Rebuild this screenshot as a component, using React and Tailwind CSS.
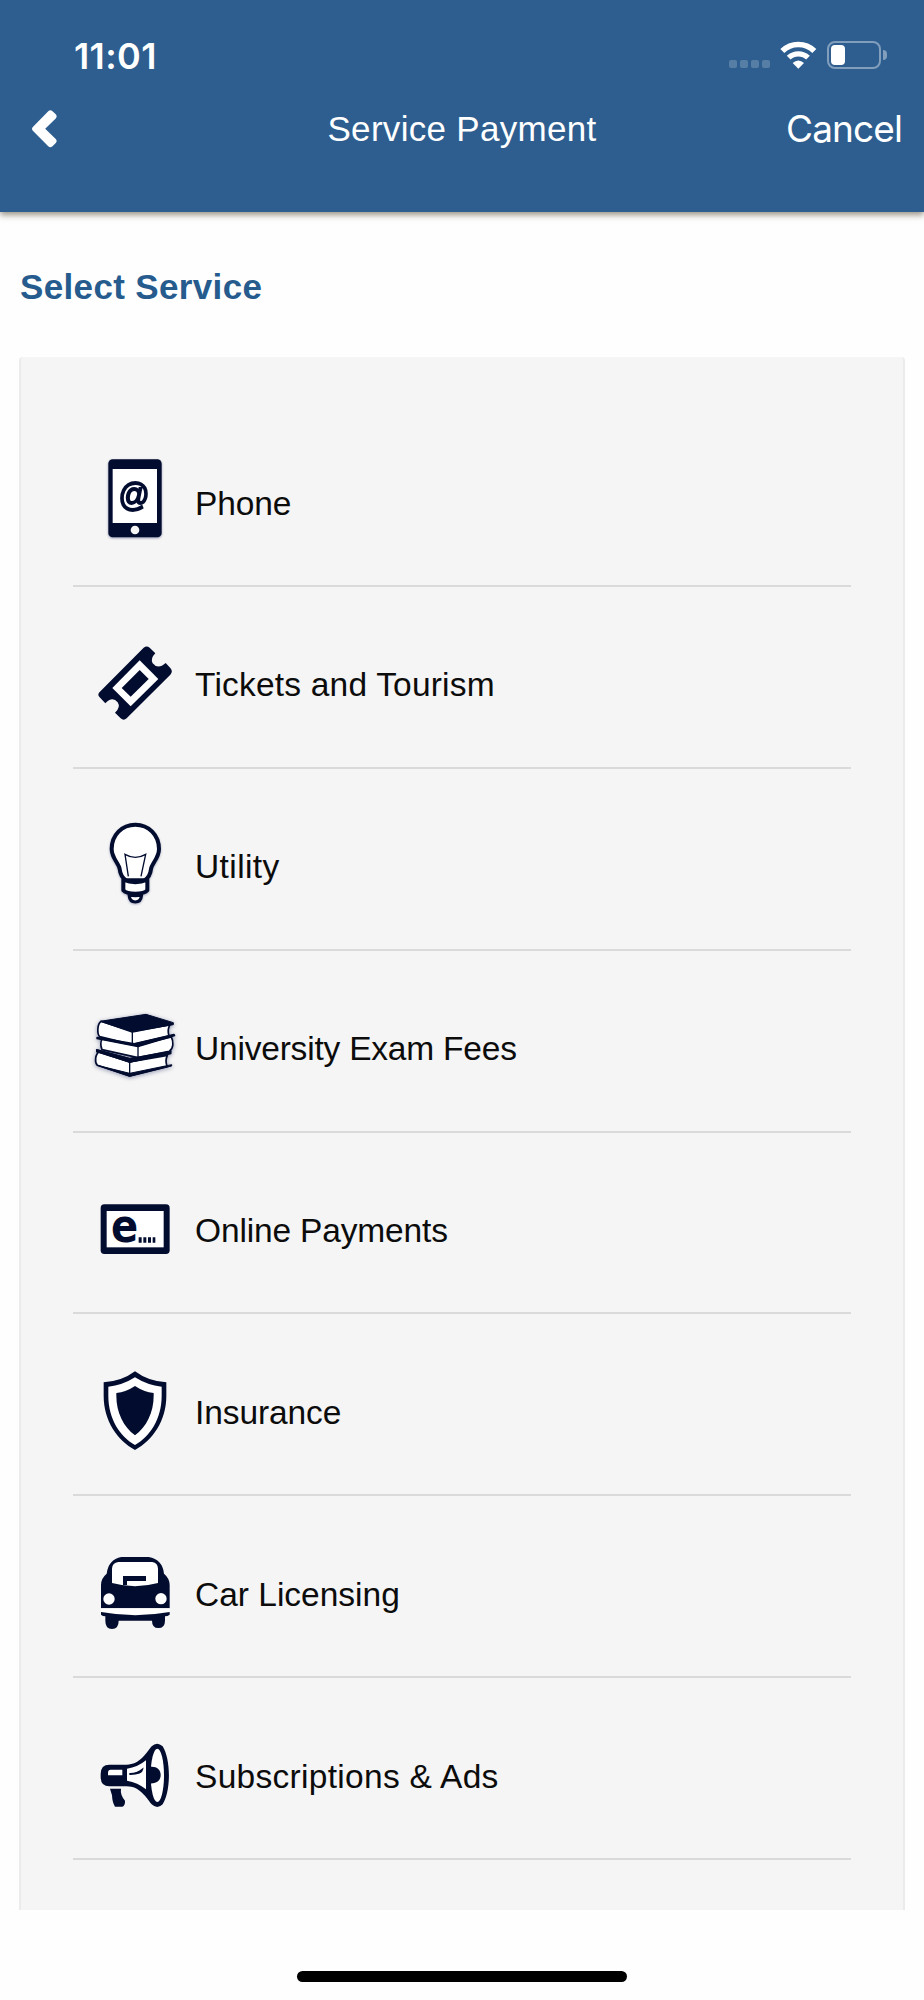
import React from 'react';

const NAVY = '#020c2f';

function PhoneIcon() {
  return (
    <svg viewBox="39 41 252 288" className="w-[84px] h-[96px] drop-shadow-[0_1px_1px_rgba(2,12,80,0.4)]">
      <rect x="85" y="57" width="160" height="234" rx="13" fill={NAVY} />
      <rect x="98" y="86" width="133" height="162" fill="#fff" />
      <text transform="translate(162 198) scale(0.98 1.08)" textAnchor="middle" fontSize="94" fontFamily="Liberation Sans, sans-serif" fill={NAVY} stroke={NAVY} strokeWidth="5">@</text>
      <circle cx="165" cy="269" r="13" fill="#f5f5f5" />
    </svg>
  );
}

function TicketIcon() {
  return (
    <svg viewBox="39 17 252 288" className="w-[84px] h-[96px]">
      <path d="M191 52q9-7 18 0l17 17q-16 16-8 30q16 20 39-1l14 15q9 10 0 20L140 264q-9 8-18 0l-17-17q18-16 8-31q-16-20-37 3l-17-18q-8-8 0-16z" fill={NAVY} />
      <path d="M179 90L235 146L152 228L97 173z" fill="#fff" />
      <path d="M179 119L206 146L152 199L125 173z" fill={NAVY} />
    </svg>
  );
}

function BulbIcon() {
  return (
    <svg viewBox="39 54 252 288" className="w-[84px] h-[96px] drop-shadow-[0_1px_1px_rgba(2,12,80,0.3)]">
      <path d="M166 74c-40 0-71 31-71 73c0 28 22 43 24 60c2 18 10 28 19 34h56c9-6 17-16 19-34c2-17 24-32 24-60c0-42-31-73-71-73z" fill="#fff" stroke={NAVY} strokeWidth="12" />
      <path d="M145 229l-10-66q31 18 62 0l-14 66" fill="none" stroke={NAVY} strokeWidth="4" />
      <path d="M130 239q36 15 72 0v32q-8 10-36 10q-28 0-36-10z" fill="#fff" stroke={NAVY} strokeWidth="12" strokeLinejoin="round" />
      <path d="M147 285q2 21 19 21q17 0 19-21q-19 4-38 0z" fill="#fff" stroke={NAVY} strokeWidth="9" strokeLinejoin="round" />
    </svg>
  );
}

function BooksIcon() {
  return (
    <svg viewBox="39 29 252 288" className="w-[84px] h-[96px] drop-shadow-[0_1px_2px_rgba(2,12,80,0.4)]">
      <g stroke={NAVY} strokeWidth="5" strokeLinejoin="round">
        <path d="M60 183c-16 8-16 34-8 42l97 32l113-29q-8-16 0-33l-113 20z" fill="#fff" />
        <path d="M52 225l97 24l126-26v4l-126 31z" fill={NAVY} strokeWidth="3" />
        <path d="M50 178l99 27l123-24v9l-123 25l-99-31z" fill={NAVY} strokeWidth="4" />
        <path d="M149 213v41" strokeWidth="4" />
        <path d="M66 146q-7 14 0 32l108 24l94-19c13-8 13-30 6-43l-100 24z" fill="#fff" />
        <path d="M50 179l99 26l123-22v6l-123 26l-99-31z" fill={NAVY} strokeWidth="4" />
        <path d="M174 168v33" strokeWidth="4" />
        <path d="M64 93c-13 7-13 38-5 46l98 24l110-26q-6-19 3-34l-113 22z" fill="#fff" />
        <path d="M51 141l112 19l119-28l2 4l-110 33l-123-24z" fill={NAVY} strokeWidth="4" />
        <path d="M60 93l138-21l82 25v6l-123 21z" fill={NAVY} strokeWidth="3" />
        <path d="M157 124v36" strokeWidth="4" />
      </g>
    </svg>
  );
}

function OnlineIcon() {
  return (
    <svg viewBox="39 4 252 288" className="w-[84px] h-[96px]">
      <rect x="62" y="71" width="207" height="149" rx="11" fill={NAVY} />
      <rect x="80" y="91" width="171" height="109" fill="#fff" />
      <text transform="translate(93 185) scale(0.89 1.04)" fontSize="135" fontWeight="700" fontFamily="DejaVu Sans, sans-serif" fill={NAVY}>e</text>
      <path d="M176 170h9v16h-9zM190 170h9v16h-9zM204 170h9v16h-9zM218 170h8v16h-8z" fill={NAVY} />
    </svg>
  );
}

function ShieldIcon() {
  return (
    <svg viewBox="39 41 252 288" className="w-[84px] h-[96px]">
      <path d="M165 63q40 30 94 33v40c0 76-41 133-94 163c-53-30-94-87-94-163V96q54-3 94-33z" fill={NAVY} />
      <path d="M165 81q38 24 80 28v27c0 70-35 122-80 148c-45-26-80-78-80-148v-27q42-4 80-28z" fill="#fff" />
      <path d="M165 107q27 18 56 21v8c0 51-22 94-56 119c-34-25-56-68-56-119v-8q29-3 56-21z" fill={NAVY} />
    </svg>
  );
}

function CarIcon() {
  return (
    <svg viewBox="39 45 252 288" className="w-[84px] h-[96px]">
      <path d="M124 78h82q42 8 46 50q17 14 17 34v70H63v-70q0-20 17-34q5-42 44-50z" fill={NAVY} />
      <path d="M115 93h102q16 2 17 20v43q-69 19-138 0v-43q1-18 19-20z" fill="#fff" />
      <path d="M129 135h69v15h-57v12h-12z" fill={NAVY} />
      <circle cx="87" cy="204" r="17" fill="#fff" />
      <circle cx="243" cy="203" r="17" fill="#fff" />
      <path d="M63 232h206v10q-103 18-206 0z" fill="#fff" />
      <path d="M63 243q103 19 206 0v8q-6 5-14 5v13q0 22-20 22q-19 0-19-22H116q0 25-20 25q-20 0-20-25v-13q-8 0-13-5z" fill={NAVY} />
    </svg>
  );
}

function MegaphoneIcon() {
  return (
    <svg viewBox="39 21 252 288" className="w-[84px] h-[96px]">
      <path d="M88 131h52c40 0 58-35 75-55q16-16 33 0c25 40 25 134 0 174q-16 16-33 0c-17-20-35-54-75-54H88q-26 0-26-28v-9q0-28 26-28z" fill={NAVY} />
      <path d="M92 146h35v17H84v-8q0-9 8-9z" fill="#fff" />
      <path d="M141 143q32-4 57-25v87q-25-21-57-26z" fill="#fff" />
      <path d="M150 158q21 0 38-14q-2 16-38 16z" fill={NAVY} stroke={NAVY} strokeWidth="4" />
      <ellipse cx="232" cy="163" rx="20" ry="80" fill="#fff" />
      <path d="M209 138c20-3 33 8 33 24s-13 27-33 25z" fill={NAVY} />
      <path d="M90 203h33q-3 18 12 36q1 14-8 18h-22q-8-12-9-34z" fill={NAVY} />
    </svg>
  );
}

const services = [
  { label: 'Phone', Icon: PhoneIcon, spacing: 'tracking-[-0.1px]' },
  { label: 'Tickets and Tourism', Icon: TicketIcon, spacing: 'tracking-[0.2px]' },
  { label: 'Utility', Icon: BulbIcon, spacing: 'tracking-[0.4px]' },
  { label: 'University Exam Fees', Icon: BooksIcon, spacing: 'tracking-[-0.2px]' },
  { label: 'Online Payments', Icon: OnlineIcon, spacing: 'tracking-[-0.15px]' },
  { label: 'Insurance', Icon: ShieldIcon, spacing: 'tracking-[-0.1px]' },
  { label: 'Car Licensing', Icon: CarIcon, spacing: 'tracking-[0px]' },
  { label: 'Subscriptions & Ads', Icon: MegaphoneIcon, spacing: 'tracking-[0.3px]' },
];

function StatusBar() {
  return (
    <div className="flex h-[84px] items-end justify-between pl-[74px] pr-[37px]">
      <span className="h-[50px] font-['Inter',sans-serif] text-[36px] leading-[44px] font-semibold tracking-[0.4px]">11:01</span>
      <div className="flex h-[44px] items-start">
        <div className="mt-[20px] mr-[10px] flex gap-[3px]">
          <div className="h-[8px] w-[8px] rounded-[2px] bg-white/20" />
          <div className="h-[8px] w-[8px] rounded-[2px] bg-white/20" />
          <div className="h-[8px] w-[8px] rounded-[2px] bg-white/20" />
          <div className="h-[8px] w-[8px] rounded-[2px] bg-white/20" />
        </div>
        <svg viewBox="270 60 111 90" className="mr-[10px] h-[30px] w-[37px]" fill="none" stroke="#fff">
          <path d="M277 93a69 69 0 0 1 96 0" strokeWidth="17" />
          <path d="M296 113a42 42 0 0 1 58 0" strokeWidth="16" />
          <path d="M325 146L308 129Q325 114 342 129z" fill="#fff" stroke="none" />
        </svg>
        <div className="mt-[1px] flex h-[28px] w-[54px] rounded-[8px] border-2 border-white/40 p-[2px]">
          <div className="h-[20px] w-[14px] rounded-[4px] bg-white" />
        </div>
        <div className="mt-[10px] ml-[2px] h-[10px] w-[4px] rounded-r-full bg-white/40" />
      </div>
    </div>
  );
}

function Header() {
  return (
    <header className="z-10 h-[212px] bg-[#2d5e8f] text-white shadow-[0_3px_6px_rgba(60,45,20,0.5)]">
      <StatusBar />
      <div className="grid h-[90px] grid-cols-[250px_1fr_250px] items-center">
        <svg viewBox="0 0 28 40" className="ml-[30px] h-[40px] w-[28px]" fill="#fff">
          <path d="M2.6 18.2L18.5 2Q20.5 .5 22.5 2.2L26 5.6Q27.5 7.4 26 9.2L15.2 19.7L26 30.2Q27.5 32 26 33.8L22.5 37.2Q20.5 39 18.5 37.4L2.6 21.4Q1.2 19.8 2.6 18.2z" />
        </svg>
        <h1 className="text-center text-[35px] leading-[40px] tracking-[0.3px]">Service Payment</h1>
        <span className="pr-[22px] text-right font-['Inter',sans-serif] text-[37px] leading-[44px] tracking-[-0.9px]">Cancel</span>
      </div>
    </header>
  );
}

function App() {
  return (
    <div className="flex h-[2000px] w-[924px] flex-col overflow-hidden bg-[#fefefe] font-['Liberation_Sans',Arial,sans-serif]">
      <Header />
      <h2 className="mt-[55px] ml-[20px] h-[90px] text-[35px] leading-[40px] font-bold tracking-[0.35px] text-[#265b8e]">Select Service</h2>
      <div className="mx-[19px] h-[1553px] shrink-0 overflow-hidden rounded-t-[4px] border-x-2 border-[#ebebeb] bg-[#f5f5f5] px-[52px] pt-[48px]">
        {services.map(({ label, Icon, spacing }) => (
          <div key={label} className="flex h-[181.9px] items-start border-b-2 border-[#dadada] pt-[49.4px] pl-[20px]">
            <Icon />
            <span className={`mt-[29.2px] ml-[18px] text-[33.5px] leading-[40px] whitespace-nowrap text-[#0c0c0c] ${spacing}`}>{label}</span>
          </div>
        ))}
      </div>
      <div className="mx-auto mt-[61px] h-[11px] w-[330px] shrink-0 rounded-full bg-black" />
    </div>
  );
}

export default App;
